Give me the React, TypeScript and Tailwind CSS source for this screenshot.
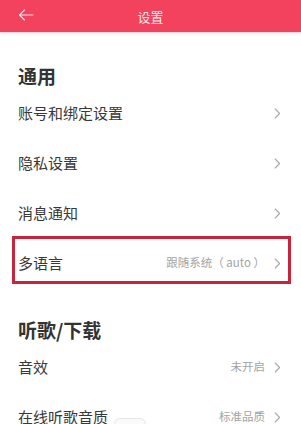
import React from "react";

const Chevron = () => (
  <svg width="7" height="11" viewBox="0 0 7 11" fill="none" className="shrink-0">
    <path d="M1.2 1 L5.6 5.5 L1.2 10" stroke="#a8a8a8" strokeWidth="1.1" strokeLinecap="round" strokeLinejoin="round" />
  </svg>
);

const Row = ({ label, value }: { label: string; value?: string }) => (
  <div className="h-[50px] flex items-center pl-[18px] pr-[20px]">
    <span className="text-[15px] text-[#383838] flex-1">{label}</span>
    {value && <span className="text-[11.5px] text-[#a3a3a3] mr-[9px]">{value}</span>}
    <Chevron />
  </div>
);

export default function App() {
  return (
    <div
      className="w-[301px] h-[424px] bg-white overflow-hidden relative"
      style={{ fontFamily: '"Noto Sans CJK SC", "Noto Sans", sans-serif' }}
    >
      <div className="h-8 bg-[#f3425e] flex items-center relative shadow-[0_1px_2px_rgba(240,100,120,0.35)]">
        <svg width="16" height="12" viewBox="0 0 16 12" fill="none" className="absolute left-[18px] top-[9px]">
          <path d="M15 6 H1.5 M6.5 1 L1.5 6 L6.5 11" stroke="#fde4e8" strokeWidth="1.1" strokeLinecap="round" strokeLinejoin="round" />
        </svg>
        <div className="flex-1 text-center text-[13px] text-[#fde8ec] leading-none">设置</div>
      </div>

      <div className="pt-8">
        <div className="h-6 flex items-center pl-[18px] text-[19px] font-bold text-[#333333]">通用</div>
        <Row label="账号和绑定设置" />
        <Row label="隐私设置" />
        <Row label="消息通知" />
        <div className="relative">
          <Row label="多语言" value="跟随系统（ auto ）" />
          <div className="absolute left-[12px] right-[10px] top-[-2px] h-[48px] border-[3px] border-[#c9243a] pointer-events-none" />
        </div>
      </div>

      <div className="pt-[30px]">
        <div className="h-6 flex items-center pl-[18px] text-[19px] font-bold text-[#333333]">听歌/下载</div>
        <Row label="音效" value="未开启" />
        <Row label="在线听歌音质" value="标准品质" />
      </div>

      <div className="absolute left-[114px] top-[418px] w-[32px] h-[12px] rounded-full border border-[#e6e6e6] bg-[#fafafa]" />
    </div>
  );
}
